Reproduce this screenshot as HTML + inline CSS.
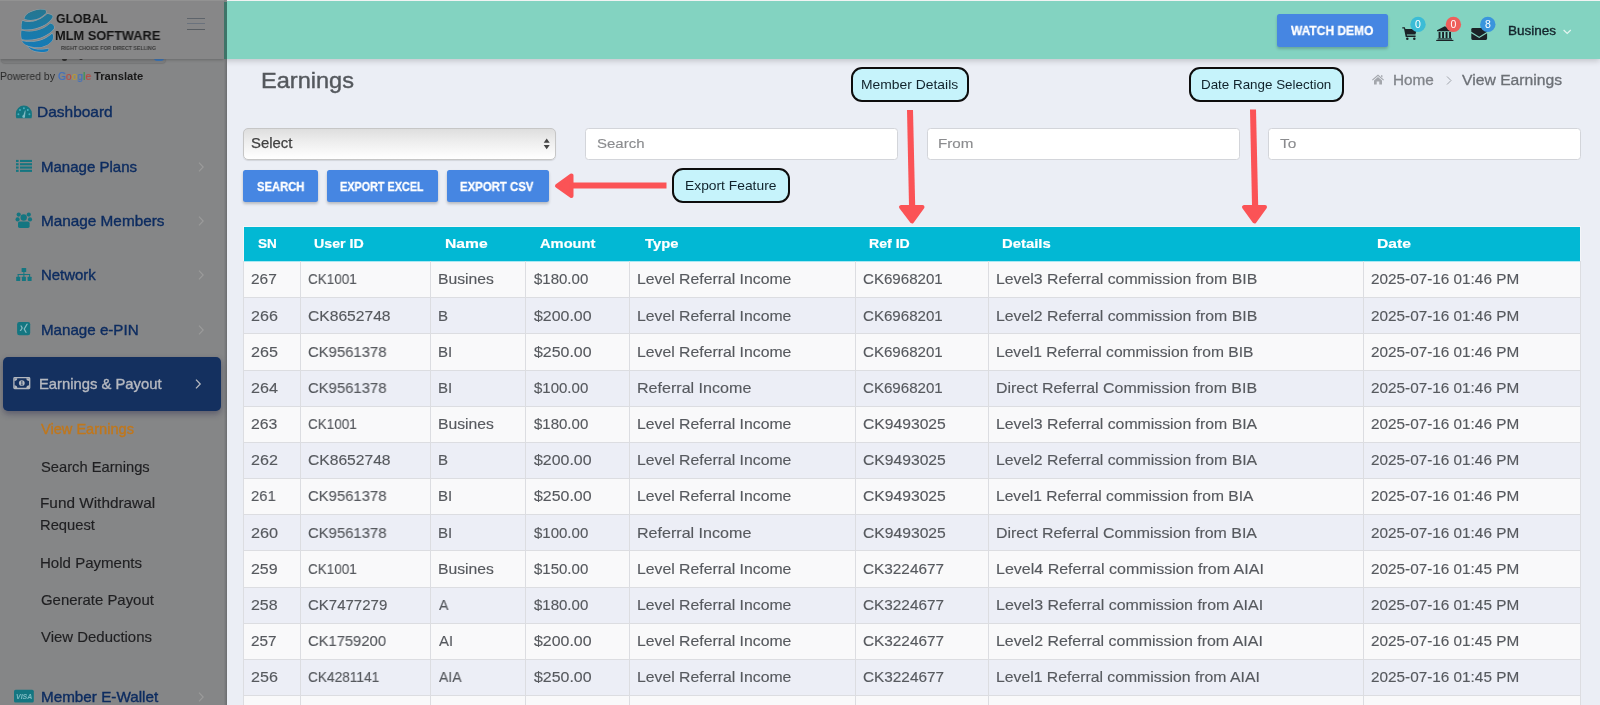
<!DOCTYPE html>
<html lang="en"><head><meta charset="utf-8"><title>Earnings</title>
<style>
html,body{margin:0;padding:0;}
body{width:1600px;height:705px;overflow:hidden;position:relative;background:#ebeef5;font-family:"Liberation Sans",sans-serif;}
.t{position:absolute;white-space:pre;transform-origin:0 50%;will-change:transform;}
.abs{position:absolute;}
#topbar{position:absolute;left:0;top:0;width:1600px;height:59px;background:#83d3c1;box-shadow:0 2px 6px rgba(0,0,0,.18);border-top:1.5px solid #f1f3f3;box-sizing:border-box;}
#side{position:absolute;left:0;top:0;width:227px;height:705px;background:#858687;overflow:hidden;}
#sidehead{position:absolute;left:0;top:0;width:224px;height:59px;background:#878788;box-shadow:0 1px 3px rgba(0,0,0,.22);border-top:1.5px solid #929292;box-sizing:border-box;}
.inp{position:absolute;top:127.5px;height:32px;box-sizing:border-box;border:1px solid #d3d5da;border-radius:3.5px;background:#fff;}
.btn{position:absolute;top:170px;height:31.5px;background:#4686e2;border-radius:2.5px;box-shadow:0 2px 3px rgba(0,0,0,.22);}
.call{position:absolute;box-sizing:border-box;border:2px solid #0d0d0d;border-radius:11px;background:#c6f3fb;}
.row{position:absolute;left:243px;width:1337.5px;}
.vl{position:absolute;top:261px;width:1px;height:444px;background:#dcdde1;}
.hl{position:absolute;left:243px;width:1337.5px;height:1px;background:#dcdde1;}
</style></head><body>

<div id="topbar"></div>
<div class="abs" style="left:1277.2px;top:14.2px;width:110.6px;height:32.5px;background:#4686e2;border-radius:2.5px;box-shadow:0 2px 3px rgba(0,0,0,.2);"></div>
<div class="t" style="left:1291.04px;top:22.30px;font-size:12.6px;line-height:18px;color:#fff;transform:scaleX(0.9519);font-weight:700;-webkit-text-stroke:0.3px #fff;">WATCH DEMO</div>
<div class="t" style="left:1507.67px;top:23.40px;font-size:12.2px;line-height:17px;color:#14242c;transform:scaleX(1.1077);-webkit-text-stroke:0.35px #14242c;">Busines</div>
<div class="t" style="left:261.41px;top:64.90px;font-size:22.4px;line-height:31px;color:#54585d;transform:scaleX(1.0512);-webkit-text-stroke:0.4px #54585d;">Earnings</div>
<div class="t" style="left:1393.00px;top:71.20px;font-size:13.9px;line-height:19px;color:#80848a;transform:scaleX(1.1014);-webkit-text-stroke:0.3px #80848a;">Home</div>
<div class="t" style="left:1461.80px;top:69.90px;font-size:14.9px;line-height:21px;color:#6c7076;transform:scaleX(1.0550);-webkit-text-stroke:0.3px #6c7076;">View Earnings</div>
<div class="abs" style="left:243px;top:127.5px;width:313px;height:32.3px;box-sizing:border-box;border:1px solid #c6c6c6;border-radius:5px;background:linear-gradient(#dedede,#ededed 40%,#fbfbfb 85%,#ffffff);box-shadow:0 1px 1px rgba(0,0,0,.1);"></div>
<div class="t" style="left:250.98px;top:133.00px;font-size:14.4px;line-height:20px;color:#404040;transform:scaleX(1.0329);-webkit-text-stroke:0.25px #404040;">Select</div>
<svg class="abs" style="left:542px;top:136px" width="10" height="16" viewBox="0 0 10 16"><path d="M4.7 2.4 L7.7 6.7 H1.7 Z M4.7 13.3 L7.7 9 H1.7 Z" fill="#444"/></svg>
<div class="inp" style="left:585px;width:313px;"></div>
<div class="inp" style="left:926.5px;width:313px;"></div>
<div class="inp" style="left:1268px;width:313px;"></div>
<div class="t" style="left:596.95px;top:134.30px;font-size:13.7px;line-height:19px;color:#8b8c8f;transform:scaleX(1.0952);-webkit-text-stroke:0.15px #8b8c8f;">Search</div>
<div class="t" style="left:937.59px;top:134.30px;font-size:13.7px;line-height:19px;color:#8b8c8f;transform:scaleX(1.1074);-webkit-text-stroke:0.15px #8b8c8f;">From</div>
<div class="t" style="left:1279.72px;top:134.30px;font-size:13.7px;line-height:19px;color:#8b8c8f;transform:scaleX(1.1273);-webkit-text-stroke:0.15px #8b8c8f;">To</div>
<div class="btn" style="left:243.1px;width:74.7px;"></div>
<div class="t" style="left:256.68px;top:177.90px;font-size:12.6px;line-height:18px;color:#fff;transform:scaleX(0.8919);font-weight:700;-webkit-text-stroke:0.3px #fff;">SEARCH</div>
<div class="btn" style="left:326.8px;width:111.7px;"></div>
<div class="t" style="left:340.36px;top:177.90px;font-size:12.6px;line-height:18px;color:#fff;transform:scaleX(0.8597);font-weight:700;-webkit-text-stroke:0.3px #fff;">EXPORT EXCEL</div>
<div class="btn" style="left:447px;width:101.5px;"></div>
<div class="t" style="left:460.32px;top:177.90px;font-size:12.6px;line-height:18px;color:#fff;transform:scaleX(0.9043);font-weight:700;-webkit-text-stroke:0.3px #fff;">EXPORT CSV</div>
<div class="call" style="left:851px;top:67px;width:117.5px;height:35px;"></div>
<div class="t" style="left:861.26px;top:75.10px;font-size:13.4px;line-height:19px;color:#10222b;transform:scaleX(1.0363);">Member Details</div>
<div class="call" style="left:1189px;top:67px;width:155px;height:35px;"></div>
<div class="t" style="left:1201.30px;top:75.10px;font-size:13.4px;line-height:19px;color:#10222b;">Date Range Selection</div>
<div class="call" style="left:672px;top:168px;width:117.5px;height:35px;"></div>
<div class="t" style="left:685.37px;top:175.50px;font-size:13.4px;line-height:19px;color:#10222b;transform:scaleX(1.0322);">Export Feature</div>
<svg class="abs" style="left:0;top:0" width="1600" height="705" viewBox="0 0 1600 705">
<g fill="#fb5356" stroke="#fb5356" stroke-linejoin="round">
<polygon points="907,110 913,110 915.2,206 909,206" stroke="none"/>
<polygon points="901,207 922.5,207 912,221.5" stroke-width="4"/>
<polygon points="1250,109.5 1256,109.5 1258.2,206 1252,206" stroke="none"/>
<polygon points="1244,207 1265,207 1254.5,221.5" stroke-width="4"/>
<rect x="572" y="182.5" width="94.5" height="6" stroke="none"/>
<polygon points="571.5,175.5 571.5,196 557,185.8" stroke-width="4"/>
</g></svg>
<div class="abs" style="left:244px;top:226.6px;width:1336.3px;height:34.4px;background:#02b8d4;box-shadow:0 0 0 1px rgba(255,255,255,.45);"></div>
<div class="t" style="left:258.15px;top:233.90px;font-size:13.3px;line-height:19px;color:#fff;transform:scaleX(1.0171);font-weight:700;-webkit-text-stroke:0.2px #fff;">SN</div>
<div class="t" style="left:313.90px;top:233.90px;font-size:13.3px;line-height:19px;color:#fff;transform:scaleX(1.0674);font-weight:700;-webkit-text-stroke:0.2px #fff;">User ID</div>
<div class="t" style="left:444.92px;top:233.90px;font-size:13.3px;line-height:19px;color:#fff;transform:scaleX(1.1771);font-weight:700;-webkit-text-stroke:0.2px #fff;">Name</div>
<div class="t" style="left:540.42px;top:233.90px;font-size:13.3px;line-height:19px;color:#fff;transform:scaleX(1.1040);font-weight:700;-webkit-text-stroke:0.2px #fff;">Amount</div>
<div class="t" style="left:644.50px;top:233.90px;font-size:13.3px;line-height:19px;color:#fff;transform:scaleX(1.1126);font-weight:700;-webkit-text-stroke:0.2px #fff;">Type</div>
<div class="t" style="left:868.80px;top:233.90px;font-size:13.3px;line-height:19px;color:#fff;transform:scaleX(1.0604);font-weight:700;-webkit-text-stroke:0.2px #fff;">Ref ID</div>
<div class="t" style="left:1002.16px;top:233.90px;font-size:13.3px;line-height:19px;color:#fff;transform:scaleX(1.1176);font-weight:700;-webkit-text-stroke:0.2px #fff;">Details</div>
<div class="t" style="left:1376.92px;top:233.90px;font-size:13.3px;line-height:19px;color:#fff;transform:scaleX(1.1748);font-weight:700;-webkit-text-stroke:0.2px #fff;">Date</div>
<div class="row" style="top:261px;height:36px;background:#f9f9fa;"></div>
<div class="row" style="top:297px;height:36px;background:#eceef6;"></div>
<div class="row" style="top:333px;height:37px;background:#f9f9fa;"></div>
<div class="row" style="top:370px;height:36px;background:#eceef6;"></div>
<div class="row" style="top:406px;height:36px;background:#f9f9fa;"></div>
<div class="row" style="top:442px;height:36px;background:#eceef6;"></div>
<div class="row" style="top:478px;height:36px;background:#f9f9fa;"></div>
<div class="row" style="top:514px;height:36px;background:#eceef6;"></div>
<div class="row" style="top:550px;height:37px;background:#f9f9fa;"></div>
<div class="row" style="top:587px;height:36px;background:#eceef6;"></div>
<div class="row" style="top:623px;height:36px;background:#f9f9fa;"></div>
<div class="row" style="top:659px;height:36px;background:#eceef6;"></div>
<div class="row" style="top:695px;height:10px;background:#f9f9fa;"></div>
<div class="hl" style="top:261px;background:#a9e9f3;"></div>
<div class="hl" style="top:297px;"></div>
<div class="hl" style="top:333px;"></div>
<div class="hl" style="top:370px;"></div>
<div class="hl" style="top:406px;"></div>
<div class="hl" style="top:442px;"></div>
<div class="hl" style="top:478px;"></div>
<div class="hl" style="top:514px;"></div>
<div class="hl" style="top:550px;"></div>
<div class="hl" style="top:587px;"></div>
<div class="hl" style="top:623px;"></div>
<div class="hl" style="top:659px;"></div>
<div class="hl" style="top:695px;"></div>
<div class="vl" style="left:243px;"></div>
<div class="vl" style="left:300px;"></div>
<div class="vl" style="left:430px;"></div>
<div class="vl" style="left:525px;"></div>
<div class="vl" style="left:629px;"></div>
<div class="vl" style="left:855px;"></div>
<div class="vl" style="left:988px;"></div>
<div class="vl" style="left:1363px;"></div>
<div class="vl" style="left:1580px;"></div>
<div class="t" style="left:250.83px;top:268.40px;font-size:15px;line-height:21px;color:#56595e;transform:scaleX(1.0316);-webkit-text-stroke:0.15px #56595e;">267</div>
<div class="t" style="left:307.92px;top:268.40px;font-size:15px;line-height:21px;color:#56595e;transform:scaleX(0.9005);-webkit-text-stroke:0.15px #56595e;">CK1001</div>
<div class="t" style="left:437.99px;top:268.40px;font-size:15px;line-height:21px;color:#56595e;transform:scaleX(1.0483);-webkit-text-stroke:0.15px #56595e;">Busines</div>
<div class="t" style="left:534.10px;top:268.40px;font-size:15px;line-height:21px;color:#56595e;-webkit-text-stroke:0.15px #56595e;">$180.00</div>
<div class="t" style="left:636.99px;top:268.40px;font-size:15px;line-height:21px;color:#56595e;transform:scaleX(1.0517);-webkit-text-stroke:0.15px #56595e;">Level Referral Income</div>
<div class="t" style="left:862.75px;top:268.40px;font-size:15px;line-height:21px;color:#56595e;transform:scaleX(1.0064);-webkit-text-stroke:0.15px #56595e;">CK6968201</div>
<div class="t" style="left:995.78px;top:268.40px;font-size:15px;line-height:21px;color:#56595e;transform:scaleX(1.0550);-webkit-text-stroke:0.15px #56595e;">Level3 Referral commission from BIB</div>
<div class="t" style="left:1370.98px;top:268.40px;font-size:15px;line-height:21px;color:#56595e;transform:scaleX(1.0209);-webkit-text-stroke:0.15px #56595e;">2025-07-16 01:46 PM</div>
<div class="t" style="left:250.79px;top:304.58px;font-size:15px;line-height:21px;color:#56595e;transform:scaleX(1.0737);-webkit-text-stroke:0.15px #56595e;">266</div>
<div class="t" style="left:307.82px;top:304.58px;font-size:15px;line-height:21px;color:#56595e;transform:scaleX(1.0417);-webkit-text-stroke:0.15px #56595e;">CK8652748</div>
<div class="t" style="left:438.05px;top:304.58px;font-size:15px;line-height:21px;color:#56595e;-webkit-text-stroke:0.15px #56595e;">B</div>
<div class="t" style="left:534.10px;top:304.58px;font-size:15px;line-height:21px;color:#56595e;transform:scaleX(1.0605);-webkit-text-stroke:0.15px #56595e;">$200.00</div>
<div class="t" style="left:636.99px;top:304.58px;font-size:15px;line-height:21px;color:#56595e;transform:scaleX(1.0517);-webkit-text-stroke:0.15px #56595e;">Level Referral Income</div>
<div class="t" style="left:862.75px;top:304.58px;font-size:15px;line-height:21px;color:#56595e;transform:scaleX(1.0064);-webkit-text-stroke:0.15px #56595e;">CK6968201</div>
<div class="t" style="left:995.78px;top:304.58px;font-size:15px;line-height:21px;color:#56595e;transform:scaleX(1.0550);-webkit-text-stroke:0.15px #56595e;">Level2 Referral commission from BIB</div>
<div class="t" style="left:1370.98px;top:304.58px;font-size:15px;line-height:21px;color:#56595e;transform:scaleX(1.0209);-webkit-text-stroke:0.15px #56595e;">2025-07-16 01:46 PM</div>
<div class="t" style="left:250.79px;top:340.76px;font-size:15px;line-height:21px;color:#56595e;transform:scaleX(1.0737);-webkit-text-stroke:0.15px #56595e;">265</div>
<div class="t" style="left:307.86px;top:340.76px;font-size:15px;line-height:21px;color:#56595e;transform:scaleX(0.9904);-webkit-text-stroke:0.15px #56595e;">CK9561378</div>
<div class="t" style="left:438.05px;top:340.76px;font-size:15px;line-height:21px;color:#56595e;-webkit-text-stroke:0.15px #56595e;">BI</div>
<div class="t" style="left:534.10px;top:340.76px;font-size:15px;line-height:21px;color:#56595e;transform:scaleX(1.0605);-webkit-text-stroke:0.15px #56595e;">$250.00</div>
<div class="t" style="left:636.99px;top:340.76px;font-size:15px;line-height:21px;color:#56595e;transform:scaleX(1.0517);-webkit-text-stroke:0.15px #56595e;">Level Referral Income</div>
<div class="t" style="left:862.75px;top:340.76px;font-size:15px;line-height:21px;color:#56595e;transform:scaleX(1.0064);-webkit-text-stroke:0.15px #56595e;">CK6968201</div>
<div class="t" style="left:995.80px;top:340.76px;font-size:15px;line-height:21px;color:#56595e;transform:scaleX(1.0397);-webkit-text-stroke:0.15px #56595e;">Level1 Referral commission from BIB</div>
<div class="t" style="left:1370.98px;top:340.76px;font-size:15px;line-height:21px;color:#56595e;transform:scaleX(1.0209);-webkit-text-stroke:0.15px #56595e;">2025-07-16 01:46 PM</div>
<div class="t" style="left:250.80px;top:376.94px;font-size:15px;line-height:21px;color:#56595e;transform:scaleX(1.0729);-webkit-text-stroke:0.15px #56595e;">264</div>
<div class="t" style="left:307.86px;top:376.94px;font-size:15px;line-height:21px;color:#56595e;transform:scaleX(0.9904);-webkit-text-stroke:0.15px #56595e;">CK9561378</div>
<div class="t" style="left:438.05px;top:376.94px;font-size:15px;line-height:21px;color:#56595e;-webkit-text-stroke:0.15px #56595e;">BI</div>
<div class="t" style="left:534.10px;top:376.94px;font-size:15px;line-height:21px;color:#56595e;-webkit-text-stroke:0.15px #56595e;">$100.00</div>
<div class="t" style="left:636.96px;top:376.94px;font-size:15px;line-height:21px;color:#56595e;transform:scaleX(1.0714);-webkit-text-stroke:0.15px #56595e;">Referral Income</div>
<div class="t" style="left:862.75px;top:376.94px;font-size:15px;line-height:21px;color:#56595e;transform:scaleX(1.0064);-webkit-text-stroke:0.15px #56595e;">CK6968201</div>
<div class="t" style="left:995.77px;top:376.94px;font-size:15px;line-height:21px;color:#56595e;transform:scaleX(1.0615);-webkit-text-stroke:0.15px #56595e;">Direct Referral Commission from BIB</div>
<div class="t" style="left:1370.98px;top:376.94px;font-size:15px;line-height:21px;color:#56595e;transform:scaleX(1.0209);-webkit-text-stroke:0.15px #56595e;">2025-07-16 01:46 PM</div>
<div class="t" style="left:250.81px;top:413.12px;font-size:15px;line-height:21px;color:#56595e;transform:scaleX(1.0526);-webkit-text-stroke:0.15px #56595e;">263</div>
<div class="t" style="left:307.92px;top:413.12px;font-size:15px;line-height:21px;color:#56595e;transform:scaleX(0.9005);-webkit-text-stroke:0.15px #56595e;">CK1001</div>
<div class="t" style="left:437.99px;top:413.12px;font-size:15px;line-height:21px;color:#56595e;transform:scaleX(1.0483);-webkit-text-stroke:0.15px #56595e;">Busines</div>
<div class="t" style="left:534.10px;top:413.12px;font-size:15px;line-height:21px;color:#56595e;-webkit-text-stroke:0.15px #56595e;">$180.00</div>
<div class="t" style="left:636.99px;top:413.12px;font-size:15px;line-height:21px;color:#56595e;transform:scaleX(1.0517);-webkit-text-stroke:0.15px #56595e;">Level Referral Income</div>
<div class="t" style="left:862.72px;top:413.12px;font-size:15px;line-height:21px;color:#56595e;transform:scaleX(1.0449);-webkit-text-stroke:0.15px #56595e;">CK9493025</div>
<div class="t" style="left:995.78px;top:413.12px;font-size:15px;line-height:21px;color:#56595e;transform:scaleX(1.0548);-webkit-text-stroke:0.15px #56595e;">Level3 Referral commission from BIA</div>
<div class="t" style="left:1370.98px;top:413.12px;font-size:15px;line-height:21px;color:#56595e;transform:scaleX(1.0209);-webkit-text-stroke:0.15px #56595e;">2025-07-16 01:46 PM</div>
<div class="t" style="left:250.79px;top:449.30px;font-size:15px;line-height:21px;color:#56595e;transform:scaleX(1.0737);-webkit-text-stroke:0.15px #56595e;">262</div>
<div class="t" style="left:307.82px;top:449.30px;font-size:15px;line-height:21px;color:#56595e;transform:scaleX(1.0417);-webkit-text-stroke:0.15px #56595e;">CK8652748</div>
<div class="t" style="left:438.05px;top:449.30px;font-size:15px;line-height:21px;color:#56595e;-webkit-text-stroke:0.15px #56595e;">B</div>
<div class="t" style="left:534.10px;top:449.30px;font-size:15px;line-height:21px;color:#56595e;transform:scaleX(1.0605);-webkit-text-stroke:0.15px #56595e;">$200.00</div>
<div class="t" style="left:636.99px;top:449.30px;font-size:15px;line-height:21px;color:#56595e;transform:scaleX(1.0517);-webkit-text-stroke:0.15px #56595e;">Level Referral Income</div>
<div class="t" style="left:862.72px;top:449.30px;font-size:15px;line-height:21px;color:#56595e;transform:scaleX(1.0449);-webkit-text-stroke:0.15px #56595e;">CK9493025</div>
<div class="t" style="left:995.78px;top:449.30px;font-size:15px;line-height:21px;color:#56595e;transform:scaleX(1.0548);-webkit-text-stroke:0.15px #56595e;">Level2 Referral commission from BIA</div>
<div class="t" style="left:1370.98px;top:449.30px;font-size:15px;line-height:21px;color:#56595e;transform:scaleX(1.0209);-webkit-text-stroke:0.15px #56595e;">2025-07-16 01:46 PM</div>
<div class="t" style="left:250.86px;top:485.48px;font-size:15px;line-height:21px;color:#56595e;transform:scaleX(0.9895);-webkit-text-stroke:0.15px #56595e;">261</div>
<div class="t" style="left:307.86px;top:485.48px;font-size:15px;line-height:21px;color:#56595e;transform:scaleX(0.9904);-webkit-text-stroke:0.15px #56595e;">CK9561378</div>
<div class="t" style="left:438.05px;top:485.48px;font-size:15px;line-height:21px;color:#56595e;-webkit-text-stroke:0.15px #56595e;">BI</div>
<div class="t" style="left:534.10px;top:485.48px;font-size:15px;line-height:21px;color:#56595e;transform:scaleX(1.0605);-webkit-text-stroke:0.15px #56595e;">$250.00</div>
<div class="t" style="left:636.99px;top:485.48px;font-size:15px;line-height:21px;color:#56595e;transform:scaleX(1.0517);-webkit-text-stroke:0.15px #56595e;">Level Referral Income</div>
<div class="t" style="left:862.72px;top:485.48px;font-size:15px;line-height:21px;color:#56595e;transform:scaleX(1.0449);-webkit-text-stroke:0.15px #56595e;">CK9493025</div>
<div class="t" style="left:995.80px;top:485.48px;font-size:15px;line-height:21px;color:#56595e;transform:scaleX(1.0396);-webkit-text-stroke:0.15px #56595e;">Level1 Referral commission from BIA</div>
<div class="t" style="left:1370.98px;top:485.48px;font-size:15px;line-height:21px;color:#56595e;transform:scaleX(1.0209);-webkit-text-stroke:0.15px #56595e;">2025-07-16 01:46 PM</div>
<div class="t" style="left:250.79px;top:521.66px;font-size:15px;line-height:21px;color:#56595e;transform:scaleX(1.0842);-webkit-text-stroke:0.15px #56595e;">260</div>
<div class="t" style="left:307.86px;top:521.66px;font-size:15px;line-height:21px;color:#56595e;transform:scaleX(0.9904);-webkit-text-stroke:0.15px #56595e;">CK9561378</div>
<div class="t" style="left:438.05px;top:521.66px;font-size:15px;line-height:21px;color:#56595e;-webkit-text-stroke:0.15px #56595e;">BI</div>
<div class="t" style="left:534.10px;top:521.66px;font-size:15px;line-height:21px;color:#56595e;-webkit-text-stroke:0.15px #56595e;">$100.00</div>
<div class="t" style="left:636.96px;top:521.66px;font-size:15px;line-height:21px;color:#56595e;transform:scaleX(1.0714);-webkit-text-stroke:0.15px #56595e;">Referral Income</div>
<div class="t" style="left:862.72px;top:521.66px;font-size:15px;line-height:21px;color:#56595e;transform:scaleX(1.0449);-webkit-text-stroke:0.15px #56595e;">CK9493025</div>
<div class="t" style="left:995.77px;top:521.66px;font-size:15px;line-height:21px;color:#56595e;transform:scaleX(1.0613);-webkit-text-stroke:0.15px #56595e;">Direct Referral Commission from BIA</div>
<div class="t" style="left:1370.98px;top:521.66px;font-size:15px;line-height:21px;color:#56595e;transform:scaleX(1.0209);-webkit-text-stroke:0.15px #56595e;">2025-07-16 01:46 PM</div>
<div class="t" style="left:250.80px;top:557.84px;font-size:15px;line-height:21px;color:#56595e;transform:scaleX(1.0632);-webkit-text-stroke:0.15px #56595e;">259</div>
<div class="t" style="left:307.92px;top:557.84px;font-size:15px;line-height:21px;color:#56595e;transform:scaleX(0.9005);-webkit-text-stroke:0.15px #56595e;">CK1001</div>
<div class="t" style="left:437.99px;top:557.84px;font-size:15px;line-height:21px;color:#56595e;transform:scaleX(1.0483);-webkit-text-stroke:0.15px #56595e;">Busines</div>
<div class="t" style="left:534.10px;top:557.84px;font-size:15px;line-height:21px;color:#56595e;-webkit-text-stroke:0.15px #56595e;">$150.00</div>
<div class="t" style="left:636.99px;top:557.84px;font-size:15px;line-height:21px;color:#56595e;transform:scaleX(1.0517);-webkit-text-stroke:0.15px #56595e;">Level Referral Income</div>
<div class="t" style="left:862.73px;top:557.84px;font-size:15px;line-height:21px;color:#56595e;transform:scaleX(1.0225);-webkit-text-stroke:0.15px #56595e;">CK3224677</div>
<div class="t" style="left:995.77px;top:557.84px;font-size:15px;line-height:21px;color:#56595e;transform:scaleX(1.0674);-webkit-text-stroke:0.15px #56595e;">Level4 Referral commission from AIAI</div>
<div class="t" style="left:1370.98px;top:557.84px;font-size:15px;line-height:21px;color:#56595e;transform:scaleX(1.0209);-webkit-text-stroke:0.15px #56595e;">2025-07-16 01:45 PM</div>
<div class="t" style="left:250.80px;top:594.02px;font-size:15px;line-height:21px;color:#56595e;transform:scaleX(1.0632);-webkit-text-stroke:0.15px #56595e;">258</div>
<div class="t" style="left:307.85px;top:594.02px;font-size:15px;line-height:21px;color:#56595e;-webkit-text-stroke:0.15px #56595e;">CK7477279</div>
<div class="t" style="left:439.30px;top:594.02px;font-size:15px;line-height:21px;color:#56595e;transform:scaleX(0.9400);-webkit-text-stroke:0.15px #56595e;">A</div>
<div class="t" style="left:534.10px;top:594.02px;font-size:15px;line-height:21px;color:#56595e;-webkit-text-stroke:0.15px #56595e;">$180.00</div>
<div class="t" style="left:636.99px;top:594.02px;font-size:15px;line-height:21px;color:#56595e;transform:scaleX(1.0517);-webkit-text-stroke:0.15px #56595e;">Level Referral Income</div>
<div class="t" style="left:862.73px;top:594.02px;font-size:15px;line-height:21px;color:#56595e;transform:scaleX(1.0225);-webkit-text-stroke:0.15px #56595e;">CK3224677</div>
<div class="t" style="left:995.77px;top:594.02px;font-size:15px;line-height:21px;color:#56595e;transform:scaleX(1.0644);-webkit-text-stroke:0.15px #56595e;">Level3 Referral commission from AIAI</div>
<div class="t" style="left:1370.98px;top:594.02px;font-size:15px;line-height:21px;color:#56595e;transform:scaleX(1.0209);-webkit-text-stroke:0.15px #56595e;">2025-07-16 01:45 PM</div>
<div class="t" style="left:250.83px;top:630.20px;font-size:15px;line-height:21px;color:#56595e;transform:scaleX(1.0211);-webkit-text-stroke:0.15px #56595e;">257</div>
<div class="t" style="left:307.86px;top:630.20px;font-size:15px;line-height:21px;color:#56595e;transform:scaleX(0.9840);-webkit-text-stroke:0.15px #56595e;">CK1759200</div>
<div class="t" style="left:439.30px;top:630.20px;font-size:15px;line-height:21px;color:#56595e;transform:scaleX(0.9923);-webkit-text-stroke:0.15px #56595e;">AI</div>
<div class="t" style="left:534.10px;top:630.20px;font-size:15px;line-height:21px;color:#56595e;transform:scaleX(1.0605);-webkit-text-stroke:0.15px #56595e;">$200.00</div>
<div class="t" style="left:636.99px;top:630.20px;font-size:15px;line-height:21px;color:#56595e;transform:scaleX(1.0517);-webkit-text-stroke:0.15px #56595e;">Level Referral Income</div>
<div class="t" style="left:862.73px;top:630.20px;font-size:15px;line-height:21px;color:#56595e;transform:scaleX(1.0225);-webkit-text-stroke:0.15px #56595e;">CK3224677</div>
<div class="t" style="left:995.77px;top:630.20px;font-size:15px;line-height:21px;color:#56595e;transform:scaleX(1.0634);-webkit-text-stroke:0.15px #56595e;">Level2 Referral commission from AIAI</div>
<div class="t" style="left:1370.98px;top:630.20px;font-size:15px;line-height:21px;color:#56595e;transform:scaleX(1.0209);-webkit-text-stroke:0.15px #56595e;">2025-07-16 01:45 PM</div>
<div class="t" style="left:250.79px;top:666.38px;font-size:15px;line-height:21px;color:#56595e;transform:scaleX(1.0737);-webkit-text-stroke:0.15px #56595e;">256</div>
<div class="t" style="left:307.92px;top:666.38px;font-size:15px;line-height:21px;color:#56595e;transform:scaleX(0.9121);-webkit-text-stroke:0.15px #56595e;">CK4281141</div>
<div class="t" style="left:439.30px;top:666.38px;font-size:15px;line-height:21px;color:#56595e;transform:scaleX(0.9320);-webkit-text-stroke:0.15px #56595e;">AIA</div>
<div class="t" style="left:534.10px;top:666.38px;font-size:15px;line-height:21px;color:#56595e;transform:scaleX(1.0605);-webkit-text-stroke:0.15px #56595e;">$250.00</div>
<div class="t" style="left:636.99px;top:666.38px;font-size:15px;line-height:21px;color:#56595e;transform:scaleX(1.0517);-webkit-text-stroke:0.15px #56595e;">Level Referral Income</div>
<div class="t" style="left:862.73px;top:666.38px;font-size:15px;line-height:21px;color:#56595e;transform:scaleX(1.0225);-webkit-text-stroke:0.15px #56595e;">CK3224677</div>
<div class="t" style="left:995.79px;top:666.38px;font-size:15px;line-height:21px;color:#56595e;transform:scaleX(1.0513);-webkit-text-stroke:0.15px #56595e;">Level1 Referral commission from AIAI</div>
<div class="t" style="left:1370.98px;top:666.38px;font-size:15px;line-height:21px;color:#56595e;transform:scaleX(1.0209);-webkit-text-stroke:0.15px #56595e;">2025-07-16 01:45 PM</div>
<div id="side">
<div class="abs" style="left:223.5px;top:59px;width:3.5px;height:646px;background:linear-gradient(to right,#838486,#6b6d6f);"></div>
<div class="abs" style="left:1px;top:50px;width:165px;height:12.6px;background:#7d7e7f;border-radius:0 0 4px 4px;box-shadow:0 1px 1px rgba(0,0,0,.12);"></div>
<div class="abs" style="left:62px;top:58px;width:5px;height:2.6px;background:#333;border-radius:0 0 2px 2px;"></div><div class="abs" style="left:79px;top:58px;width:4px;height:2.4px;background:#333;border-radius:0 0 2px 2px;"></div>
<div class="abs" style="left:154px;top:55px;width:10px;height:6px;background:#3f77b8;border-radius:0 0 3px 3px;"></div>
<div id="sidehead"></div>
<svg class="abs" style="left:14px;top:2px" width="50" height="56" viewBox="0 0 629 705">
<defs><linearGradient id="lg" gradientUnits="userSpaceOnUse" x1="0" y1="90" x2="0" y2="630"><stop offset="0" stop-color="#27768f"/><stop offset="0.45" stop-color="#1a7aa6"/><stop offset="1" stop-color="#147bbb"/></linearGradient></defs>
<g fill="url(#lg)" stroke="#9db0ba" stroke-width="9" paint-order="stroke">
<path d="M130,215 C135,160 200,110 330,95 L390,98 C405,105 405,130 398,142 C330,215 230,245 130,215 Z"/>
<path d="M105,235 C200,275 330,235 415,150 C450,150 490,165 487,190 C440,290 250,370 95,340 C92,300 97,265 105,235 Z"/>
<path d="M93,360 C250,400 380,340 455,272 C490,275 510,300 503,335 C440,420 280,500 97,470 C88,430 88,395 93,360 Z"/>
<path d="M100,490 C280,525 400,470 480,395 C500,420 495,460 478,490 C420,560 300,600 160,545 C130,530 110,510 100,490 Z"/>
<path d="M175,560 C280,615 380,600 432,585 C440,600 430,615 415,622 C350,635 290,630 250,615 C215,600 190,580 175,560 Z"/>
</g>
</svg>

<div class="t" style="left:55.74px;top:9.30px;font-size:13.4px;line-height:19px;color:#141414;transform:scaleX(0.9184);font-weight:700;">GLOBAL</div>
<div class="t" style="left:55.45px;top:26.60px;font-size:12.9px;line-height:18px;color:#141414;transform:scaleX(0.9938);font-weight:700;">MLM SOFTWARE</div>
<div class="t" style="left:60.67px;top:44.20px;font-size:5.6px;line-height:8px;color:#3a3a3a;transform:scaleX(0.9287);font-weight:700;">RIGHT CHOICE FOR DIRECT SELLING</div>
<div class="abs" style="left:186.6px;top:17.7px;width:18.4px;height:1.2px;background:#5e646b;"></div>
<div class="abs" style="left:186.6px;top:23.2px;width:18.4px;height:1.2px;background:#6a727d;"></div>
<div class="abs" style="left:186.6px;top:28.9px;width:18.4px;height:1.2px;background:#585d62;"></div>
<div class="t" style="left:-0.04px;top:69.00px;font-size:10.6px;line-height:15px;color:#2a2a2a;transform:scaleX(0.9800);">Powered by</div>
<div class="t" id="glogo" style="left:57.7px;top:68.2px;font-size:11px;line-height:16px;transform:scaleX(0.93);-webkit-text-stroke:0.2px;"><span style="color:#3f6fbe;-webkit-text-stroke-color:#3f6fbe">G</span><span style="color:#b8483f;-webkit-text-stroke-color:#b8483f">o</span><span style="color:#c09a30;-webkit-text-stroke-color:#c09a30">o</span><span style="color:#3f6fbe;-webkit-text-stroke-color:#3f6fbe">g</span><span style="color:#37954f;-webkit-text-stroke-color:#37954f">l</span><span style="color:#b8483f;-webkit-text-stroke-color:#b8483f">e</span></div>
<div class="t" style="left:94.10px;top:69.00px;font-size:10.6px;line-height:15px;color:#181818;transform:scaleX(1.0573);font-weight:700;">Translate</div>
<div class="t" style="left:37.41px;top:102.30px;font-size:14.2px;line-height:20px;color:#0d2c60;transform:scaleX(1.0908);-webkit-text-stroke:0.35px #0d2c60;">Dashboard</div>
<div class="t" style="left:40.69px;top:156.75px;font-size:14.2px;line-height:20px;color:#0d2c60;transform:scaleX(1.0587);-webkit-text-stroke:0.35px #0d2c60;">Manage Plans</div>
<svg class="abs" style="left:196.5px;top:160.75px" width="8" height="12" viewBox="0 0 8 12"><path d="M2 1.6 L6.2 6 L2 10.4" stroke="#9b9b9b" stroke-width="1.1" fill="none"/></svg>
<div class="t" style="left:40.67px;top:211.00px;font-size:14.2px;line-height:20px;color:#0d2c60;transform:scaleX(1.0796);-webkit-text-stroke:0.35px #0d2c60;">Manage Members</div>
<svg class="abs" style="left:196.5px;top:215px" width="8" height="12" viewBox="0 0 8 12"><path d="M2 1.6 L6.2 6 L2 10.4" stroke="#9b9b9b" stroke-width="1.1" fill="none"/></svg>
<div class="t" style="left:40.70px;top:265.20px;font-size:14.2px;line-height:20px;color:#0d2c60;transform:scaleX(1.0537);-webkit-text-stroke:0.35px #0d2c60;">Network</div>
<svg class="abs" style="left:196.5px;top:269.2px" width="8" height="12" viewBox="0 0 8 12"><path d="M2 1.6 L6.2 6 L2 10.4" stroke="#9b9b9b" stroke-width="1.1" fill="none"/></svg>
<div class="t" style="left:40.68px;top:319.75px;font-size:14.2px;line-height:20px;color:#0d2c60;transform:scaleX(1.0670);-webkit-text-stroke:0.35px #0d2c60;">Manage e-PIN</div>
<svg class="abs" style="left:196.5px;top:323.75px" width="8" height="12" viewBox="0 0 8 12"><path d="M2 1.6 L6.2 6 L2 10.4" stroke="#9b9b9b" stroke-width="1.1" fill="none"/></svg>
<div class="abs" style="left:3px;top:357px;width:218px;height:54px;background:#14305f;border-radius:5px;box-shadow:0 3px 6px rgba(20,20,60,.35);"></div>
<div class="t" style="left:38.96px;top:373.60px;font-size:14.2px;line-height:20px;color:#b6b9c0;transform:scaleX(1.0429);-webkit-text-stroke:0.35px #b6b9c0;">Earnings &amp; Payout</div>
<svg class="abs" style="left:193.8px;top:377.6px" width="8" height="12" viewBox="0 0 8 12"><path d="M2 1.6 L6.2 6 L2 10.4" stroke="#b6b9c0" stroke-width="1.3" fill="none"/></svg>
<div class="t" style="left:41.06px;top:419.25px;font-size:14.2px;line-height:20px;color:#c0771c;transform:scaleX(1.0277);-webkit-text-stroke:0.35px #c0771c;">View Earnings</div>
<div class="t" style="left:40.88px;top:456.50px;font-size:14.2px;line-height:20px;color:#1f1f21;transform:scaleX(1.0361);-webkit-text-stroke:0.15px #1f1f21;">Search Earnings</div>
<div class="t" style="left:40.32px;top:493.25px;font-size:14.2px;line-height:20px;color:#1f1f21;transform:scaleX(1.0813);-webkit-text-stroke:0.15px #1f1f21;">Fund Withdrawal</div>
<div class="t" style="left:40.36px;top:515.30px;font-size:14.2px;line-height:20px;color:#1f1f21;transform:scaleX(1.0386);-webkit-text-stroke:0.15px #1f1f21;">Request</div>
<div class="t" style="left:40.34px;top:552.70px;font-size:14.2px;line-height:20px;color:#1f1f21;transform:scaleX(1.0607);-webkit-text-stroke:0.15px #1f1f21;">Hold Payments</div>
<div class="t" style="left:40.87px;top:589.60px;font-size:14.2px;line-height:20px;color:#1f1f21;transform:scaleX(1.0520);-webkit-text-stroke:0.15px #1f1f21;">Generate Payout</div>
<div class="t" style="left:41.40px;top:626.50px;font-size:14.2px;line-height:20px;color:#1f1f21;transform:scaleX(1.0524);-webkit-text-stroke:0.15px #1f1f21;">View Deductions</div>
<div class="t" style="left:40.93px;top:686.80px;font-size:14.2px;line-height:20px;color:#0d2c60;transform:scaleX(1.0744);-webkit-text-stroke:0.35px #0d2c60;">Member E-Wallet</div>
<svg class="abs" style="left:196.8px;top:691px" width="8" height="12" viewBox="0 0 8 12"><path d="M2 1.6 L6.2 6 L2 10.4" stroke="#9b9b9b" stroke-width="1.1" fill="none"/></svg>
<svg class="abs" style="left:0;top:0" width="60" height="705" viewBox="0 0 60 705">
<g fill="#147681">
<!-- dashboard gauge -->
<path d="M16.3 118.2 Q15.6 116.2 15.9 113.6 A8 8 0 0 1 31.9 113.6 Q32.2 116.2 31.5 118.2 Z"/>
<g fill="#45afc0"><circle cx="18.4" cy="114.2" r="0.95"/><circle cx="20" cy="110" r="0.95"/><circle cx="23.9" cy="108.2" r="0.95"/><circle cx="27.8" cy="110" r="0.95"/><circle cx="29.4" cy="114.2" r="0.95"/></g>
<path d="M22.7 117.3 L24.9 110.4 L25.6 110.6 L24.9 117.6 Z" fill="#7fb9c2"/><circle cx="23.7" cy="116.4" r="1.3" fill="#7fb9c2"/>
<!-- list -->
<rect x="16" y="159.9" width="2.6" height="2.1"/><rect x="20" y="159.9" width="12" height="2.1"/>
<rect x="16" y="163.2" width="2.6" height="2.1"/><rect x="20" y="163.2" width="12" height="2.1"/>
<rect x="16" y="166.5" width="2.6" height="2.1"/><rect x="20" y="166.5" width="12" height="2.1"/>
<rect x="16" y="169.8" width="2.6" height="2.1"/><rect x="20" y="169.8" width="12" height="2.1"/>
<!-- users -->
<circle cx="18.7" cy="214.6" r="2.1"/><circle cx="28.8" cy="214.6" r="2.1"/>
<circle cx="17.6" cy="219.4" r="2.1"/><circle cx="30" cy="219.4" r="2.1"/>
<circle cx="23.7" cy="217.5" r="3.2"/>
<rect x="18" y="221.6" width="11.6" height="6.3" rx="1.6"/>
<!-- sitemap -->
<rect x="21.6" y="268" width="4.6" height="4" rx="0.5"/>
<rect x="23.4" y="271.5" width="1" height="3"/>
<rect x="17.7" y="274" width="12.4" height="1"/>
<rect x="17.7" y="274" width="1" height="3"/><rect x="29.1" y="274" width="1" height="3"/><rect x="23.4" y="274" width="1" height="3"/>
<rect x="16.2" y="276.7" width="4" height="4.3" rx="0.5"/><rect x="21.9" y="276.7" width="4" height="4.3" rx="0.5"/><rect x="27.6" y="276.7" width="4" height="4.3" rx="0.5"/>
<!-- xing square -->
<rect x="17.1" y="322" width="13.1" height="13.3" rx="2.2"/>
<path d="M20.2 325.6 L21.6 325.6 L22.9 327.9 L21 331 L19.6 331 L21.5 327.9 Z" fill="#86b9c1"/>
<path d="M26.6 323.8 L28 323.8 L24.9 329 L26.9 332.7 L25.5 332.7 L23.5 329 Z" fill="#86b9c1"/>
<!-- visa -->
<rect x="14" y="689.7" width="19.8" height="12.8" rx="1.6"/>
</g>
<text x="16" y="699.4" font-family="Liberation Sans, sans-serif" font-size="7.6" font-weight="700" font-style="italic" fill="#7fbcc4" textLength="16.2" lengthAdjust="spacingAndGlyphs">VISA</text>
<!-- money bill -->
<rect x="13.9" y="377.7" width="15.8" height="10.8" rx="0.8" fill="none" stroke="#b3b7bf" stroke-width="1.3"/>
<path d="M14.4 378.2 H17.3 A3 3 0 0 1 14.4 381 Z M29.2 378.2 H26.3 A3 3 0 0 0 29.2 381 Z M14.4 388 H17.3 A3 3 0 0 0 14.4 385.2 Z M29.2 388 H26.3 A3 3 0 0 1 29.2 385.2 Z" fill="#b3b7bf"/>
<circle cx="21.8" cy="383.1" r="2.9" fill="#b3b7bf"/>
<path d="M21 381.8 L22.3 381.1 V384.7 H23 V385.2 H20.8 V384.7 H21.5 V382.1 L21 382.3 Z" fill="#14305c"/>
</svg>

</div>
<div class="abs" style="left:224px;top:1.5px;width:3px;height:57.5px;background:#3e7468;"></div>
<svg class="abs" style="left:1395px;top:10px" width="205" height="45" viewBox="1395 10 205 45">
<g fill="#1b2227">
<!-- cart -->
<path d="M1402.3 27.3 H1404.8 L1405.4 28.9 H1416.9 L1415.4 34.4 H1406.8 L1407 35.6 H1415.6 V37 H1405.7 L1404 28.6 H1402.3 Z"/>
<circle cx="1407.3" cy="38.7" r="1.25"/><circle cx="1414.3" cy="38.7" r="1.25"/>
<!-- bank -->
<path d="M1444.8 26.2 L1452.6 30.3 V31.3 H1437 V30.3 Z"/>
<rect x="1438.6" y="32" width="1.9" height="6.2"/><rect x="1442.1" y="32" width="1.9" height="6.2"/><rect x="1445.6" y="32" width="1.9" height="6.2"/><rect x="1449.1" y="32" width="1.9" height="6.2"/>
<rect x="1437.6" y="38.4" width="14.4" height="1.1"/><rect x="1436.2" y="39.9" width="17.2" height="1.1"/>
<!-- envelope -->
<path d="M1471.3 33.2 L1479.2 38.1 L1487.1 33.2 V38.6 Q1487.1 39.9 1485.8 39.9 H1472.6 Q1471.3 39.9 1471.3 38.6 Z"/>
<path d="M1471.3 31.8 V29.2 Q1471.3 27.9 1472.6 27.9 H1485.8 Q1487.1 27.9 1487.1 29.2 V31.8 L1479.2 36.7 Z"/>
</g>
<circle cx="1418" cy="24.4" r="7.7" fill="#3bbcd6"/>
<circle cx="1453.4" cy="24.4" r="7.7" fill="#ee5f5b"/>
<circle cx="1487.8" cy="24.4" r="7.7" fill="#3a95dd"/>
<g font-family="Liberation Sans, sans-serif" font-size="10.5" fill="#fff" text-anchor="middle">
<text x="1418" y="28.1">0</text><text x="1453.4" y="28.1">0</text><text x="1487.8" y="28.1">8</text>
</g>
<path d="M1563.6 30 L1567.2 33.4 L1570.8 30" stroke="#e6f5f1" stroke-width="1.2" fill="none"/>
</svg>
<svg class="abs" style="left:1371px;top:73px" width="14" height="13" viewBox="0 0 14 13">
<path d="M7 1.6 L13 6.8 L12.3 7.6 L7 3.1 L1.7 7.6 L1 6.8 Z M3 7.4 L7 4 L11 7.4 V11.6 H8.3 V8.6 H5.7 V11.6 H3 Z M10 2.3 H11.4 V4.6 L10 3.4 Z" fill="#a3a6ac"/>
</svg>
<svg class="abs" style="left:1445px;top:75px" width="8" height="11" viewBox="0 0 8 11"><path d="M2 1.5 L6 5.5 L2 9.5" stroke="#9fa3aa" stroke-width="1" fill="none"/></svg>

</body></html>
